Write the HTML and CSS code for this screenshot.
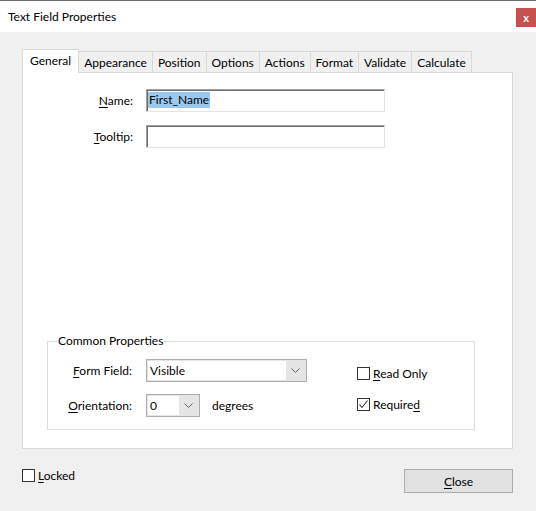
FILE: index.html
```html
<!DOCTYPE html>
<html lang="en">
<head>
    <meta charset="UTF-8">
    <title>Text Field Properties</title>
    <link rel="stylesheet" href="styles.css">
</head>
<body>
    <div class="window">
        <!-- Title bar -->
        <div class="titlebar">
            <span class="title">Text Field Properties</span>
            <span class="close-x">x</span>
        </div>

        <div class="content">
            <!-- Tabs -->
            <div class="tabs">
                <div class="tab active">General</div>
                <div class="tab">Appearance</div>
                <div class="tab">Position</div>
                <div class="tab">Options</div>
                <div class="tab">Actions</div>
                <div class="tab">Format</div>
                <div class="tab">Validate</div>
                <div class="tab">Calculate</div>
            </div>

            <div class="panel">
                <div class="field-row">
                    <label class="field-label"><u>N</u>ame:</label>
                    <div class="textbox"><span class="sel">First_Name</span></div>
                </div>
                <div class="field-row">
                    <label class="field-label"><u>T</u>ooltip:</label>
                    <div class="textbox"></div>
                </div>

                <fieldset class="common">
                    <legend>Common Properties</legend>
                    <div class="props">
                        <label class="prop-label"><u>F</u>orm Field:</label>
                        <div class="combo combo-wide">
                            <div class="combo-field">Visible</div>
                            <div class="combo-arrow">
                                <svg width="9" height="5" viewBox="0 0 9 5"><polyline points="0.5,0.5 4.5,4.5 8.5,0.5" fill="none" stroke="#606060" stroke-width="1"/></svg>
                            </div>
                        </div>

                        <div class="flags">
                            <div class="check-row">
                                <span class="checkbox"></span>
                                <span><u>R</u>ead Only</span>
                            </div>
                            <div class="check-row">
                                <span class="checkbox">
                                    <svg width="11" height="11" viewBox="0 0 11 11"><polyline points="1.5,5.5 4,8.5 9.5,1.5" fill="none" stroke="#333" stroke-width="1.1"/></svg>
                                </span>
                                <span>Require<u>d</u></span>
                            </div>
                        </div>

                        <label class="prop-label"><u>O</u>rientation:</label>
                        <div class="orient">
                            <div class="combo combo-small">
                                <div class="combo-field">0</div>
                                <div class="combo-arrow">
                                    <svg width="9" height="5" viewBox="0 0 9 5"><polyline points="0.5,0.5 4.5,4.5 8.5,0.5" fill="none" stroke="#606060" stroke-width="1"/></svg>
                                </div>
                            </div>
                            <span>degrees</span>
                        </div>
                    </div>
                </fieldset>
            </div>

            <div class="footer">
                <div class="check-row">
                    <span class="checkbox"></span>
                    <span><u>L</u>ocked</span>
                </div>
                <button class="close-btn"><u>C</u>lose</button>
            </div>
        </div>
    </div>
</body>
</html>
```

FILE: styles.css
```css
* {
    margin: 0;
    padding: 0;
    box-sizing: border-box;
}

body {
    font-family: 'Lato', 'Liberation Sans', sans-serif;
    font-size: 12px;
    color: #000;
    background: #f0f0f0;
}

u {
    text-decoration: underline;
    text-underline-offset: 2px;
}

.window {
    border-top: 1px solid #6f6f6f;
    height: 511px;
}

/* Title bar */
.titlebar {
    height: 31px;
    background: #ffffff;
    display: flex;
    align-items: center;
    padding-left: 8px;
}

.title {
    font-size: 12px;
}

.close-x {
    margin-left: auto;
    align-self: flex-start;
    margin-top: 7px;
    width: 20px;
    height: 19px;
    background: #c75050;
    color: #fff;
    font-weight: bold;
    font-size: 11px;
    display: flex;
    align-items: center;
    justify-content: center;
    line-height: 1;
}

.content {
    padding: 17px 23px 0 22px;
}

/* Tabs */
.tabs {
    display: flex;
    align-items: flex-end;
    margin-bottom: -1px;
    position: relative;
    z-index: 1;
}

.tab {
    height: 21px;
    margin-bottom: 1px;
    padding: 0 5px;
    border: 1px solid #d9d9d9;
    border-bottom: none;
    border-left: none;
    background: #f0f0f0;
    display: flex;
    align-items: center;
}

.tab.active {
    height: 24px;
    margin-bottom: 0;
    padding: 0 7px 2px 7px;
    background: #ffffff;
    border-left: 1px solid #d9d9d9;
}

.panel {
    height: 377px;
    background: #ffffff;
    border: 1px solid #d9d9d9;
    display: flex;
    flex-direction: column;
    padding-top: 16px;
}

.field-row {
    display: flex;
    align-items: center;
    margin-bottom: 13px;
}

.field-label {
    width: 110px;
    text-align: right;
    margin-right: 13px;
}

.textbox {
    width: 239px;
    height: 23px;
    border: 1px solid;
    border-color: #a0a0a0 #e3e3e3 #e3e3e3 #a0a0a0;
    box-shadow: inset 1px 1px 0 #6d6d6d;
    padding: 2px 0 0 1px;
    line-height: 16px;
}

.sel {
    background: #99c9ef;
    display: inline-block;
    padding: 0 1px;
}

/* Common properties */
.common {
    margin: auto 37px 18px 24px;
    border: 1px solid #dcdcdc;
    padding: 10px 0 12px 0;
}

.common legend {
    margin-left: 9px;
    padding: 0 1px;
    line-height: 16px;
}

.props {
    display: grid;
    grid-template-columns: 84px 161px 1fr;
    column-gap: 14px;
    row-gap: 12px;
    align-items: center;
}

.prop-label {
    text-align: right;
}

.combo {
    height: 23px;
    border: 1px solid #adadad;
    background: #e5e5e5;
    padding: 1px;
    display: flex;
}

.combo-wide {
    width: 161px;
}

.combo-small {
    width: 54px;
}

.combo-field {
    flex: 1;
    background: #ffffff;
    padding-left: 2px;
    line-height: 19px;
}

.combo-arrow {
    width: 19px;
    display: flex;
    align-items: center;
    justify-content: center;
}

.orient {
    display: flex;
    align-items: center;
    gap: 12px;
}

.flags {
    grid-column: 3;
    grid-row: 1 / 3;
    align-self: start;
    padding: 7px 0 0 36px;
    display: flex;
    flex-direction: column;
    gap: 16px;
}

.check-row {
    display: flex;
    align-items: center;
    gap: 3px;
}

.checkbox {
    width: 13px;
    height: 13px;
    border: 1px solid #333;
    background: #ffffff;
    display: flex;
    align-items: center;
    justify-content: center;
}

/* Footer */
.footer {
    display: flex;
    justify-content: space-between;
    align-items: flex-start;
    margin-top: 20px;
}

.footer .check-row {
    margin-top: -1px;
}

.close-btn {
    width: 109px;
    height: 24px;
    border: 1px solid #adadad;
    background: #e1e1e1;
    font-family: inherit;
    font-size: 12px;
    color: #000;
}
```
